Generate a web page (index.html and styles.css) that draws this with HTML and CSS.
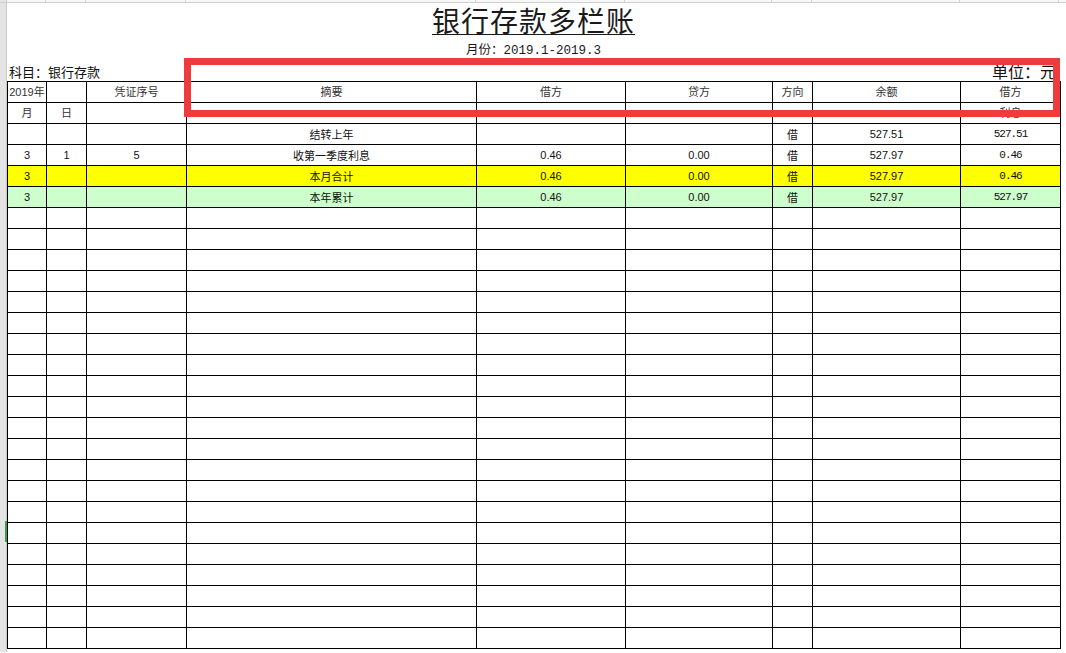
FILE: index.html
```html
<!DOCTYPE html>
<html lang="zh-CN">
<head>
<meta charset="utf-8">
<title>银行存款多栏账</title>
<link rel="stylesheet" href="styles.css">
</head>
<body>
<div class="app">
  <div class="colhead">
    <div class="ch ch-corner"></div>
    <div class="ch w1"></div><div class="ch w2"></div><div class="ch w3"></div><div class="ch w4"></div><div class="ch w5"></div><div class="ch w6"></div><div class="ch w7"></div><div class="ch w8"></div><div class="ch w9"></div>
  </div>
  <div class="main">
    <div class="rowhead"><span class="active-row"></span></div>
    <div class="sheet">
      <div class="title-wrap"><h1 class="title">银行存款多栏账</h1></div>
      <div class="period">月份：2019.1-2019.3</div>
      <div class="meta"><span class="subject">科目：银行存款</span><span class="unit">单位：元</span></div>
      <table class="ledger">
        <colgroup>
          <col class="w1"><col class="w2"><col class="w3"><col class="w4"><col class="w5"><col class="w6"><col class="w7"><col class="w8"><col class="w9">
        </colgroup>
        <thead>
          <tr><th>2019年</th><th></th><th>凭证序号</th><th>摘要</th><th>借方</th><th>贷方</th><th>方向</th><th>余额</th><th>借方</th></tr>
          <tr><th>月</th><th>日</th><th></th><th></th><th></th><th></th><th></th><th></th><th>利息</th></tr>
        </thead>
        <tbody>
          <tr><td></td><td></td><td></td><td class="cjk">结转上年</td><td></td><td></td><td class="cjk">借</td><td>527.51</td><td class="mono">527.51</td></tr>
          <tr><td>3</td><td>1</td><td>5</td><td class="cjk">收第一季度利息</td><td>0.46</td><td>0.00</td><td class="cjk">借</td><td>527.97</td><td class="mono">0.46</td></tr>
          <tr class="month"><td>3</td><td></td><td></td><td class="cjk">本月合计</td><td>0.46</td><td>0.00</td><td class="cjk">借</td><td>527.97</td><td class="mono">0.46</td></tr>
          <tr class="year"><td>3</td><td></td><td></td><td class="cjk">本年累计</td><td>0.46</td><td>0.00</td><td class="cjk">借</td><td>527.97</td><td class="mono">527.97</td></tr>
          <tr><td></td><td></td><td></td><td></td><td></td><td></td><td></td><td></td><td></td></tr>
          <tr><td></td><td></td><td></td><td></td><td></td><td></td><td></td><td></td><td></td></tr>
          <tr><td></td><td></td><td></td><td></td><td></td><td></td><td></td><td></td><td></td></tr>
          <tr><td></td><td></td><td></td><td></td><td></td><td></td><td></td><td></td><td></td></tr>
          <tr><td></td><td></td><td></td><td></td><td></td><td></td><td></td><td></td><td></td></tr>
          <tr><td></td><td></td><td></td><td></td><td></td><td></td><td></td><td></td><td></td></tr>
          <tr><td></td><td></td><td></td><td></td><td></td><td></td><td></td><td></td><td></td></tr>
          <tr><td></td><td></td><td></td><td></td><td></td><td></td><td></td><td></td><td></td></tr>
          <tr><td></td><td></td><td></td><td></td><td></td><td></td><td></td><td></td><td></td></tr>
          <tr><td></td><td></td><td></td><td></td><td></td><td></td><td></td><td></td><td></td></tr>
          <tr><td></td><td></td><td></td><td></td><td></td><td></td><td></td><td></td><td></td></tr>
          <tr><td></td><td></td><td></td><td></td><td></td><td></td><td></td><td></td><td></td></tr>
          <tr><td></td><td></td><td></td><td></td><td></td><td></td><td></td><td></td><td></td></tr>
          <tr><td></td><td></td><td></td><td></td><td></td><td></td><td></td><td></td><td></td></tr>
          <tr><td></td><td></td><td></td><td></td><td></td><td></td><td></td><td></td><td></td></tr>
          <tr><td></td><td></td><td></td><td></td><td></td><td></td><td></td><td></td><td></td></tr>
          <tr><td></td><td></td><td></td><td></td><td></td><td></td><td></td><td></td><td></td></tr>
          <tr><td></td><td></td><td></td><td></td><td></td><td></td><td></td><td></td><td></td></tr>
          <tr><td></td><td></td><td></td><td></td><td></td><td></td><td></td><td></td><td></td></tr>
          <tr><td></td><td></td><td></td><td></td><td></td><td></td><td></td><td></td><td></td></tr>
          <tr><td></td><td></td><td></td><td></td><td></td><td></td><td></td><td></td><td></td></tr>
        </tbody>
      </table>
    </div>
  </div>
  <div class="annotation"></div>
</div>
</body>
</html>
```

FILE: styles.css
```css
* { box-sizing: border-box; }

html, body {
  margin: 0;
  padding: 0;
  background: #ffffff;
}

body {
  font-family: "Liberation Sans", "Noto Sans CJK SC", sans-serif;
  color: #111;
  overflow: hidden;
}

.app {
  position: relative;
  width: 1066px;
  height: 653px;
  overflow: hidden;
}

/* spreadsheet column header remnant */
.colhead {
  display: flex;
  height: 3px;
  border-bottom: 1px solid #cfcfcf;
  background: #f7f7f7;
}
.ch { border-right: 1px solid #d6d6d6; flex: none; }
.ch-corner { width: 7px; background: #e4e4e4; border-right: 1px solid #c8c8c8; }
.ch.w1 { width: 39px; }
.ch.w2 { width: 40px; }
.ch.w3 { width: 100px; }
.ch.w4 { width: 290px; }
.ch.w5 { width: 149px; }
.ch.w6 { width: 147px; }
.ch.w7 { width: 40px; }
.ch.w8 { width: 148px; }
.ch.w9 { width: 99px; }

.main {
  display: flex;
  height: 649px;
}

.rowhead {
  position: relative;
  flex: none;
  width: 7px;
  background: #e4e4e4;
  border-right: 1px solid #c8c8c8;
}
.active-row {
  position: absolute;
  left: 5px;
  top: 518px;
  width: 2px;
  height: 21px;
  background: #3f9a4a;
}

.sheet {
  flex: none;
  width: 1053px;
  display: flex;
  flex-direction: column;
}

.title-wrap {
  display: flex;
  justify-content: center;
  padding-top: 3px;
}
.title {
  margin: 0;
  font-family: "Noto Sans CJK SC", sans-serif;
  font-weight: 400;
  font-size: 28px;
  line-height: 28px;
  color: #1a1a1a;
  border-bottom: 1px solid #1a1a1a;
  letter-spacing: 1px;
}

.period {
  margin-top: 9px;
  text-align: center;
  font-family: "Liberation Mono", "Noto Sans CJK SC", monospace;
  font-size: 12.5px;
  line-height: 15px;
  color: #1a1a1a;
}

.meta {
  display: flex;
  justify-content: space-between;
  align-items: flex-end;
  height: 22px;
  padding: 0 0 2px 2px;
  font-family: "Noto Sans CJK SC", sans-serif;
  color: #111;
}
.subject { font-size: 13px; line-height: 14px; }
.unit { font-size: 16px; line-height: 16px; margin-right: 4px; }

.ledger {
  border-collapse: collapse;
  table-layout: fixed;
  width: 1053px;
}
.ledger col.w1 { width: 39px; }
.ledger col.w2 { width: 40px; }
.ledger col.w3 { width: 100px; }
.ledger col.w4 { width: 290px; }
.ledger col.w5 { width: 149px; }
.ledger col.w6 { width: 147px; }
.ledger col.w7 { width: 40px; }
.ledger col.w8 { width: 148px; }
.ledger col.w9 { width: 100px; }

.ledger tr { height: 21px; }
.ledger th,
.ledger td {
  border: 1px solid #000;
  padding: 0;
  height: 21px;
  text-align: center;
  vertical-align: middle;
  font-size: 11px;
  line-height: 12px;
  white-space: nowrap;
  overflow: hidden;
}
.ledger th {
  font-weight: 400;
  color: #333;
}
.ledger td { color: #111; }
.ledger .cjk { font-family: "Noto Sans CJK SC", sans-serif; }
.ledger .mono {
  font-family: "Liberation Mono", monospace;
  font-size: 11px;
  letter-spacing: -1px;
}

.ledger tr.month td { background: #ffff00; }
.ledger tr.year td { background: #ccffcc; }

/* red annotation frame drawn over the screenshot */
.annotation {
  position: absolute;
  left: 184px;
  top: 58px;
  width: 876px;
  height: 59px;
  border: 7px solid #ee3b3b;
}
```
